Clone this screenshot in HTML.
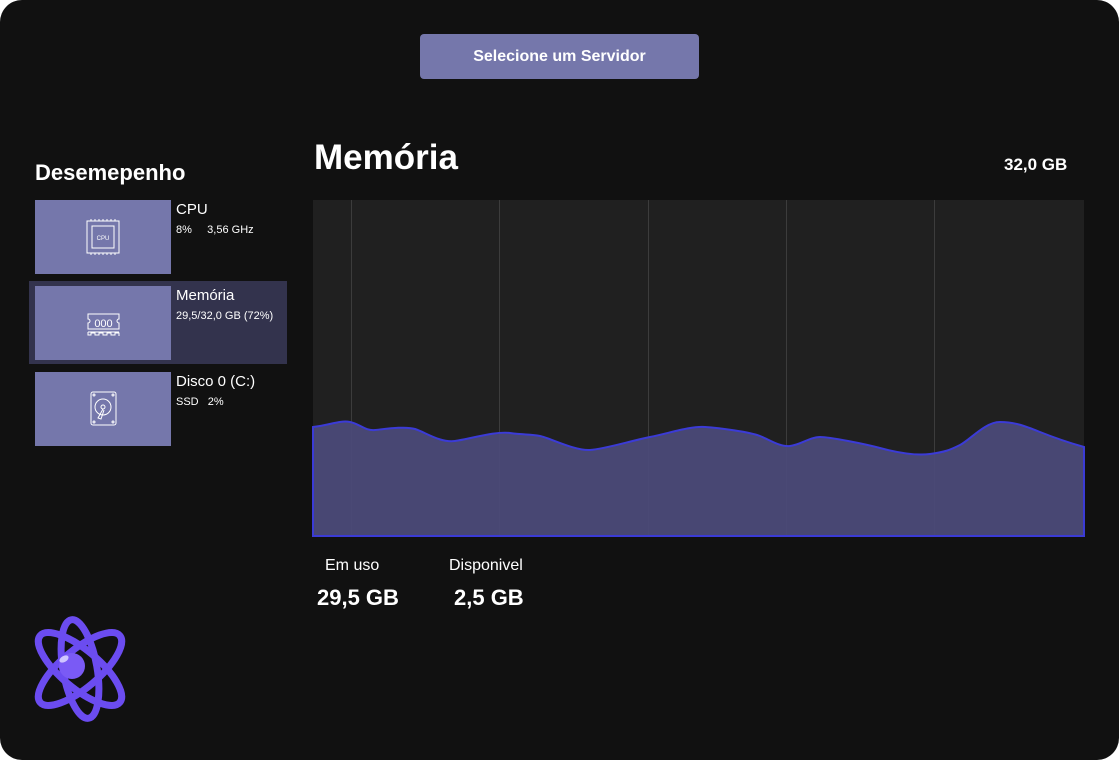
<!DOCTYPE html><html><head><style>
html,body{margin:0;background:#fff;}
.page{position:relative;width:1119px;height:760px;background:#111111;border-radius:22px;overflow:hidden;font-family:"Liberation Sans",sans-serif;color:#fff;}
.btn{position:absolute;left:420px;top:34px;width:279px;height:45px;background:#7577ab;border-radius:4px;font-weight:bold;font-size:16px;text-align:center;line-height:45px;}
.h{position:absolute;font-weight:bold;}
.card{position:absolute;left:35px;width:136px;height:74px;background:#7577ab;}
.lbl{position:absolute;left:176px;font-size:15px;}
.sub{position:absolute;left:176px;font-size:11px;}
</style></head><body><div class="page">
<div class="btn">Selecione um Servidor</div>
<div class="h" style="left:35px;top:160px;font-size:22px">Desemepenho</div>
<div style="position:absolute;left:29px;top:281px;width:258px;height:83px;background:#33334d"></div>
<div class="card" style="top:200px"><svg width="136" height="74"><g fill="none" stroke="#fff" stroke-width="1"><rect x="52" y="21" width="32" height="32"/><rect x="57" y="26" width="22" height="22"/><path d="M56 21v-2M60 21v-2M64 21v-2M68 21v-2M72 21v-2M76 21v-2M80 21v-2M56 53v2M60 53v2M64 53v2M68 53v2M72 53v2M76 53v2M80 53v2"/></g><text x="68" y="40" fill="#fff" font-size="6" text-anchor="middle" font-family="Liberation Sans">CPU</text></svg></div>
<div class="lbl" style="top:201px">CPU</div><div class="sub" style="top:224px">8%&nbsp;&nbsp;&nbsp;&nbsp;&nbsp;3,56 GHz</div>
<div class="card" style="top:286px"><svg width="136" height="74"><g fill="none" stroke="#fff"><path d="M53 28h31v5a2 2 0 0 0 0 4v6H53v-6a2 2 0 0 0 0-4z"/><path d="M53 46h31M53 46v3h3v-2h4v2h4v-2h4v2h4v-2h4v2h4v-2h4v3"/></g><text x="68.5" y="41" fill="#fff" font-size="11" text-anchor="middle" font-family="Liberation Sans">000</text></svg></div>
<div class="lbl" style="top:287px">Memória</div><div class="sub" style="top:310px">29,5/32,0 GB (72%)</div>
<div class="card" style="top:372px"><svg width="136" height="74"><g fill="none" stroke="#fff"><rect x="56" y="20" width="25" height="33" rx="2"/><circle cx="68" cy="35" r="8"/><circle cx="68" cy="35" r="2"/><path d="M68 37l-5 9 3 1 3-9"/><circle cx="59" cy="23" r="1"/><circle cx="78" cy="23" r="1"/><circle cx="59" cy="50" r="1"/><circle cx="78" cy="50" r="1"/></g></svg></div>
<div class="lbl" style="top:373px">Disco 0 (C:)</div><div class="sub" style="top:396px">SSD&nbsp;&nbsp;&nbsp;2%</div>
<div class="h" style="left:314px;top:138px;font-size:35px">Memória</div>
<div class="h" style="left:1004px;top:155px;font-size:17px">32,0 GB</div>
<svg style="position:absolute;left:0;top:0" width="1119" height="760">
<rect x="313" y="200" width="771" height="336" fill="#202020"/>
<g stroke="#3c3c3c" stroke-width="1"><path d="M351.5 200V536M499.5 200V536M648.5 200V536M786.5 200V536M934.5 200V536"/></g>
<path d="M313 427C330 425 340 420 350 422S365 431 375 430S405 426 415 429S440 443 455 441S495 431 510 433S530 434 540 436S575 451 590 450S630 441 650 437S690 426 705 427S750 432 760 436S780 447 790 446S810 437 820 437S865 444 880 448S915 456 930 454S950 450 960 445S985 422 1000 422S1025 426 1040 432S1070 443 1084 447V536H313Z" fill="#4b4a78" fill-opacity="0.95" stroke="#3b3bd6" stroke-width="2"/>
<g fill="none" stroke="#6b4cf0" stroke-width="7"><ellipse cx="80" cy="669" rx="52" ry="19" transform="rotate(-40 80 669)"/><ellipse cx="80" cy="669" rx="52" ry="19" transform="rotate(40 80 669)"/><ellipse cx="80" cy="669" rx="50" ry="17" transform="rotate(80 80 669)"/></g>
<circle cx="72" cy="666" r="13" fill="#7a5af5"/><ellipse cx="64" cy="659" rx="5" ry="3" fill="#cfc5ff" transform="rotate(-30 64 659)"/>
</svg>
<div style="position:absolute;left:325px;top:557px;font-size:16px">Em uso</div>
<div class="h" style="left:317px;top:585px;font-size:22px">29,5 GB</div>
<div style="position:absolute;left:449px;top:557px;font-size:16px">Disponivel</div>
<div class="h" style="left:454px;top:585px;font-size:22px">2,5 GB</div>
</div></body></html>
